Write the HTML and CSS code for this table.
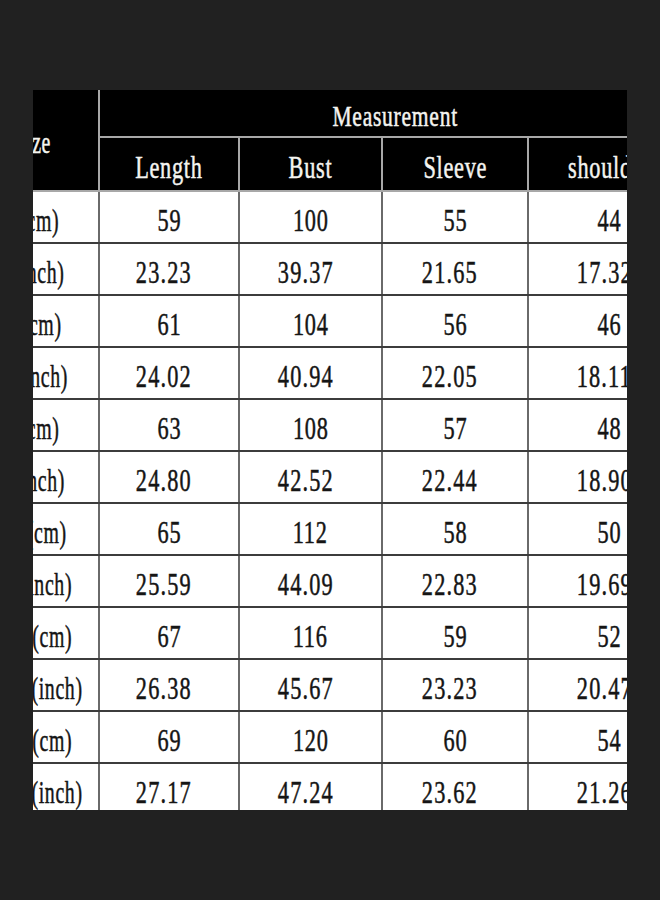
FILE: index.html
```html
<!DOCTYPE html>
<html>
<head>
<meta charset="utf-8">
<link rel="stylesheet" href="styles.css">
</head>
<body>
<div class="frame">
  <table class="chart">
    <colgroup>
      <col class="c-size"><col class="c-len"><col class="c-bust"><col class="c-sleeve"><col class="c-shoulder">
    </colgroup>
    <thead>
      <tr class="h1">
        <th rowspan="2" class="size-h"><span class="t">Size</span></th>
        <th colspan="4" class="meas"><span class="t">Measurement</span></th>
      </tr>
      <tr class="h2">
        <th><span class="t">Length</span></th>
        <th><span class="t">Bust</span></th>
        <th><span class="t">Sleeve</span></th>
        <th><span class="t">shoulder</span></th>
      </tr>
    </thead>
    <tbody>
      <tr><td><span class="t">S(cm)</span></td><td><span class="t">59</span></td><td><span class="t">100</span></td><td><span class="t">55</span></td><td><span class="t">44</span></td></tr>
      <tr><td><span class="t">S(inch)</span></td><td><span class="t">23.23</span></td><td><span class="t">39.37</span></td><td><span class="t">21.65</span></td><td><span class="t">17.32</span></td></tr>
      <tr><td><span class="t">M(cm)</span></td><td><span class="t">61</span></td><td><span class="t">104</span></td><td><span class="t">56</span></td><td><span class="t">46</span></td></tr>
      <tr><td><span class="t">M(inch)</span></td><td><span class="t">24.02</span></td><td><span class="t">40.94</span></td><td><span class="t">22.05</span></td><td><span class="t">18.11</span></td></tr>
      <tr><td><span class="t">L(cm)</span></td><td><span class="t">63</span></td><td><span class="t">108</span></td><td><span class="t">57</span></td><td><span class="t">48</span></td></tr>
      <tr><td><span class="t">L(inch)</span></td><td><span class="t">24.80</span></td><td><span class="t">42.52</span></td><td><span class="t">22.44</span></td><td><span class="t">18.90</span></td></tr>
      <tr><td><span class="t">XL(cm)</span></td><td><span class="t">65</span></td><td><span class="t">112</span></td><td><span class="t">58</span></td><td><span class="t">50</span></td></tr>
      <tr><td><span class="t">XL(inch)</span></td><td><span class="t">25.59</span></td><td><span class="t">44.09</span></td><td><span class="t">22.83</span></td><td><span class="t">19.69</span></td></tr>
      <tr><td><span class="t">2XL(cm)</span></td><td><span class="t">67</span></td><td><span class="t">116</span></td><td><span class="t">59</span></td><td><span class="t">52</span></td></tr>
      <tr><td><span class="t">2XL(inch)</span></td><td><span class="t">26.38</span></td><td><span class="t">45.67</span></td><td><span class="t">23.23</span></td><td><span class="t">20.47</span></td></tr>
      <tr><td><span class="t">3XL(cm)</span></td><td><span class="t">69</span></td><td><span class="t">120</span></td><td><span class="t">60</span></td><td><span class="t">54</span></td></tr>
      <tr><td><span class="t">3XL(inch)</span></td><td><span class="t">27.17</span></td><td><span class="t">47.24</span></td><td><span class="t">23.62</span></td><td><span class="t">21.26</span></td></tr>
    </tbody>
  </table>
</div>
</body>
</html>
```
FILE: styles.css
```css
html, body {
  margin: 0;
  padding: 0;
  background: #212121;
}
body {
  width: 660px;
  height: 900px;
  overflow: hidden;
}
.frame {
  margin: 90px 0 0 33px;
  width: 594px;
  height: 720px;
  overflow: hidden;
  background: #fff;
}
.chart {
  margin-left: -67px;
  border-collapse: collapse;
  table-layout: fixed;
  width: 724px;
  font-family: "Liberation Serif", "Times New Roman", serif;
  font-size: 31px;
  color: #151515;
}
.c-size { width: 132px; }
.c-len { width: 140px; }
.c-bust { width: 143px; }
.c-sleeve { width: 146px; }
.c-shoulder { width: 163px; }
.chart th,
.chart td {
  padding: 0;
  text-align: center;
  vertical-align: middle;
  line-height: 31px;
  white-space: nowrap;
}
.chart th {
  background: #000;
  color: #f4f4f0;
  font-weight: normal;
  border: 2px solid #a8a8a8;
  border-top: 0;
}
.chart .h1 th { height: 42px; padding-top: 4px; }
.chart .h1 .meas { font-size: 30px; }
.chart .h2 th { height: 46px; padding-top: 6px; }
.chart .size-h { padding-top: 0; }
.chart td {
  background: #fff;
  height: 44px;
  padding-top: 6px;
  border: 2px solid #3c3c3c;
  border-left-color: #6a6a6a;
  border-right-color: #6a6a6a;
}
.chart tbody tr:first-child td { border-top-color: #8a8a8a; }
.t {
  display: inline-block;
  letter-spacing: 1px;
  transform: scaleX(0.72);
  transform-origin: center;
  -webkit-text-stroke: 0.5px currentColor;
}
.chart td:first-child .t,
.chart .size-h .t {
  transform: scaleX(0.64);
}
.chart tbody tr:nth-child(even) td:not(:first-child) .t {
  letter-spacing: 1.6px;
  padding-right: 14px;
}
```
